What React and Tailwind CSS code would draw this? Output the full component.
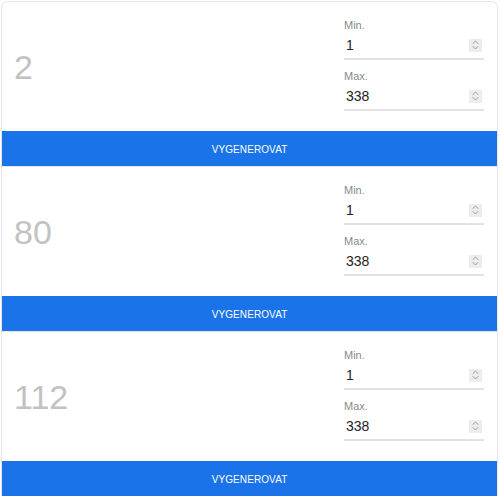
import React from "react";

function Spinner() {
  return (
    <div className="w-[13px] h-[13px] bg-[#ededed] flex items-center justify-center">
      <svg width="7" height="10" viewBox="0 0 7 10" fill="none" stroke="#9a9a9a" strokeWidth="1" strokeLinecap="round" strokeLinejoin="round">
        <path d="M1 3.5 L3.5 1 L6 3.5" />
        <path d="M1 6.5 L3.5 9 L6 6.5" />
      </svg>
    </div>
  );
}

function Field({ label, value }) {
  return (
    <div className="flex flex-col">
      <div className="h-[14px] text-[11px] leading-[14px] text-[#8a8a8a]">{label}</div>
      <div className="h-[26px] flex items-center justify-between pl-[2px] pr-[2px]">
        <span className="text-[14px] text-[#222]">{value}</span>
        <Spinner />
      </div>
      <div className="h-[2px] bg-[#e2e2e2]" />
    </div>
  );
}

function Card({ num, first }) {
  return (
    <div className={"border-x border-t border-[#e6e6e6] flex flex-col " + (first ? "rounded-t-[6px]" : "")}>
      <div className="h-[129px] flex items-center justify-between">
        <div className="pl-[12px] text-[34px] text-[#c2c2c2] leading-none mt-[1px]">{num}</div>
        <div className="w-[140px] mr-[13px] flex flex-col gap-[9px] mt-[-4px]">
          <Field label="Min." value="1" />
          <Field label="Max." value="338" />
        </div>
      </div>
      <div className="h-[35px] bg-[#1a73e8] flex items-center justify-center text-white text-[10px] tracking-[0.1px] pt-[2px]">
        VYGENEROVAT
      </div>
    </div>
  );
}

export default function App() {
  return (
    <div className="w-[500px] h-[500px] bg-white pl-[1px] pt-[1px]" style={{ fontFamily: '"Liberation Sans", Arial, sans-serif' }}>
      <div className="w-[497px] flex flex-col">
        <Card num="2" first />
        <Card num="80" />
        <Card num="112" />
      </div>
    </div>
  );
}
